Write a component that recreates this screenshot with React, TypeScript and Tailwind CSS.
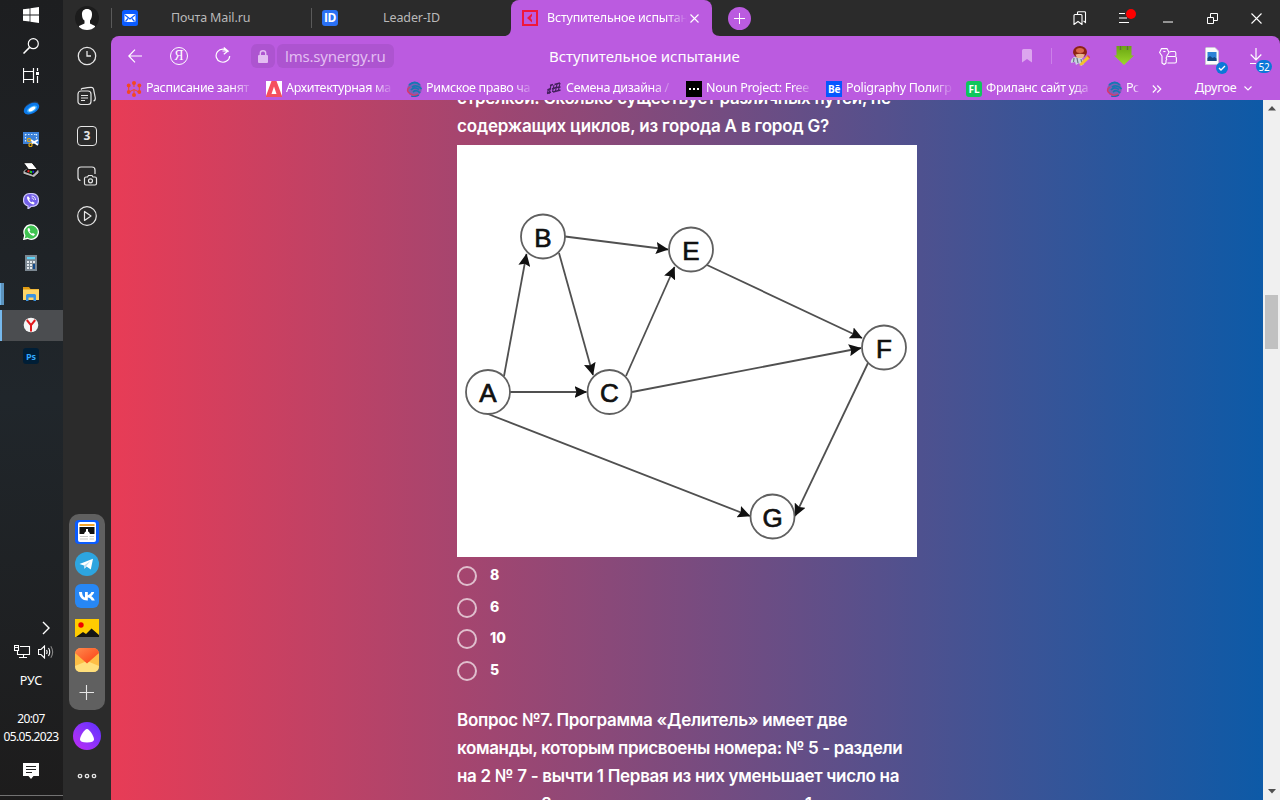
import React from "react";

type IconProps = { w?: number; h?: number; vb?: string; className?: string; sw?: number; children: React.ReactNode };

function Icon({ w = 24, h, vb, className = "", sw = 1.2, children }: IconProps) {
  const height = h ?? w;
  return (
    <svg
      width={w}
      height={height}
      viewBox={vb ?? `0 0 ${w} ${height}`}
      fill="none"
      stroke="currentColor"
      strokeWidth={sw}
      className={`block shrink-0 ${className}`}
    >
      {children}
    </svg>
  );
}

/* ---------- OS task bar ---------- */

const taskIcons: React.ReactNode[] = [
  <Icon w={16} key="win">
    <g fill="#fff" stroke="none">
      <path d="M0 2.3 6.6 1.4V7.5H0zM7.4 1.3 16 0V7.5H7.4zM0 8.4H6.6V14.6L0 13.7zM7.4 8.4H16V16L7.4 14.7z" />
    </g>
  </Icon>,
  <Icon w={16} key="search">
    <circle cx="10.3" cy="5.7" r="5" />
    <path d="M6.6 9.4 0.5 15.5" strokeWidth="1.5" />
  </Icon>,
  <Icon w={16} h={18} key="view">
    <path d="M.5 0V3.500H10.500V0M.5 15V11.500H10.500V15M.5 5.500V9.500M10.500 5.500V9.500M.5 3.500V11.500M10.500 3.500V11.500M14.500 0V3M14.500 8V15" />
    <rect x="13" y="4" width="3" height="3" fill="#fff" stroke="none" />
  </Icon>,
  <Icon w={18} h={16} key="disk">
    <g stroke="none">
      <ellipse cx="9" cy="6.500" rx="8" ry="3.800" transform="rotate(-28 9 6)" fill="#2a3a50" />
      <ellipse cx="9.500" cy="8.700" rx="8.300" ry="5" transform="rotate(-28 9.500 8.700)" fill="#0b78e8" />
      <ellipse cx="10" cy="9" rx="5.500" ry="2.700" transform="rotate(-30 10 9)" fill="#45b4ff" />
      <ellipse cx="10" cy="9" rx="3.800" ry="1.700" transform="rotate(-30 10 9)" fill="#fff" />
    </g>
  </Icon>,
  <Icon w={16} key="snip">
    <rect y="1" width="16" height="12" fill="#3b80d8" stroke="none" />
    <path d="M2 3.500H14M2.500 3V11M13.500 3V9" stroke="#d6ecff" strokeDasharray="1.500 1.500" />
    <path d="M8 9 15 14M8.500 12.500 15 9" stroke="#fff" strokeWidth="1.800" />
    <circle cx="6" cy="9" r="1.600" stroke="#e3a818" />
    <circle cx="7.500" cy="14" r="1.600" stroke="#e3a818" />
  </Icon>,
  <Icon w={16} key="scan">
    <g stroke="#000" strokeWidth=".8">
      <path d="M0 9 4 6 16 8V11L11 15.500 0 12z" fill="#b9b9b9" />
      <path d="M2 9.500 5 6.500 14 8.500 10 12.500z" fill="#111" />
      <path d="M.5 .7H9L14.500 7.500H5.500z" fill="#fff" />
    </g>
    <path d="M4.500 9 6.500 9.500" stroke="#e22" strokeWidth="2" />
    <path d="M7 9.500 9 10.500" stroke="#2c2" strokeWidth="2" />
    <path d="M9.500 9.500 11 10" stroke="#22e" strokeWidth="2" />
  </Icon>,
  <Icon w={16} key="viber">
    <path d="M8 .5C13 .5 15.500 2.500 15.500 7.300S13 13.500 8 13.500L5 16V13C2 12 .5 10.500 .5 7.300 .5 2.500 3 .5 8 .5z" fill="#7360e8" stroke="#cfc8fa" />
    <path d="M4.300 3.600C3 5.500 6.500 11 10.500 11.500L11.800 9.900 9.600 8.500 8.700 9.300C7.500 8.800 6.600 7.800 6.200 6.700L7 5.800 5.600 3.400z" fill="#fff" stroke="none" />
    <path d="M8.500 3C11 3 12.500 4.500 12.500 7M8.700 5C10 5 10.600 5.800 10.600 6.800" stroke="#fff" strokeWidth=".9" />
  </Icon>,
  <Icon w={16} key="wa">
    <path d="M.8 15.300 1.800 11.500A7.200 7.200 0 1 1 4.500 14.300z" fill="#3fc351" stroke="#fff" strokeWidth="1.300" />
    <path d="M5 4.200C3.500 6 7 11.500 10.800 11.800L12 10.200 9.900 8.900 9 9.800C7.800 9.300 7 8.500 6.500 7.300L7.300 6.400 6.300 4.100z" fill="#fff" stroke="none" />
  </Icon>,
  <Icon w={12} h={16} key="calc">
    <g stroke="none">
      <rect width="12" height="16" fill="#7b8791" />
      <rect x="2" y="2" width="8" height="2.200" fill="#5fd3f7" />
      <g fill="#e4e9ed">
        <path d="M2 6h2v2H2zM5 6h2v2H5zM8 6h2v2H8zM2 9h2v2H2zM5 9h2v2H5zM2 12h2v2H2zM5 12h2v2H5z" />
      </g>
      <rect x="8" y="9" width="2" height="5" fill="#124a8c" />
    </g>
  </Icon>,
  <Icon w={16} h={14} key="folder">
    <g stroke="none">
      <path d="M0 0H6L7.500 2H16V5H0z" fill="#e09a10" />
      <rect y="2.500" width="16" height="10.500" fill="#fdd568" />
      <path d="M3 14V8.500Q3 7 4.500 7H11.500Q13 7 13 8.500V14H10.500V10.500H5.500V14z" fill="#3b93e0" />
    </g>
  </Icon>,
  <Icon w={16} key="ya">
    <circle cx="8" cy="8" r="7.300" fill="#f5f5f5" stroke="none" />
    <path d="M3.800 3 8 8.200 12.200 3M8 8V14.500" stroke="#e2191d" strokeWidth="2" />
  </Icon>,
  <div key="ps" className="flex h-4 w-4 items-center justify-center rounded-[3px] bg-[#001e36] font-['Open_Sans',sans-serif] text-[9px] leading-none font-bold text-[#31a8ff]">
    Ps
  </div>,
];

function TaskBar() {
  return (
    <aside className="flex h-[800px] w-[63px] shrink-0 flex-col bg-gradient-to-b from-[#1d1e20] via-[#20262b] to-[#1d1c1c] text-white">
      {taskIcons.map((icon, i) => (
        <div
          key={i}
          className={
            i === 10
              ? "flex h-[31px] items-center justify-center border-l-2 border-[#76b9ed] bg-[#4b4d50] pr-1 pb-px"
              : "flex h-[31px] items-center pr-px pb-px"
          }
        >
          {i === 9 && <span className="flex h-[22px] w-1 border-l border-[#76b9ed] bg-[#5c93bd]" />}
          <span className={i === 9 ? "flex flex-1 justify-center pr-1" : "flex flex-1 justify-center"}>{icon}</span>
        </div>
      ))}
      <div className="mt-auto flex flex-col font-['Noto_Sans',sans-serif] text-[12px]">
        <div className="flex h-4 justify-end pt-px pr-[13px]">
          <Icon w={8} h={14} sw={1.400}>
            <path d="M1 1 7 7 1 13" />
          </Icon>
        </div>
        <div className="mt-[8px] flex h-4 items-center gap-[7px] pl-[14px]">
          <Icon w={17} h={14} sw={1.100}>
            <path d="M6 1.500H15.500V9.500H3.500V6M9.500 9.500V12.500M5 12.500H13" />
            <path d="M.5 .5H4.500V5.500H.5zM.5 2.500H4.500" />
          </Icon>
          <Icon w={17} h={14} sw={1.100}>
            <path d="M.5 4.500H3L6.500 1V13L3 9.500H.5zM8.500 5Q9.700 7 8.500 9M10.500 3Q13 7 10.500 11" />
            <path d="M12.800 1.200Q16.500 7 12.800 12.800" stroke="#888" />
          </Icon>
        </div>
        <div className="mt-[13px] pr-px text-center text-[12.5px] leading-4">РУС</div>
        <div className="mt-[21px] pr-px text-center leading-[18px] tracking-[-0.65px]">
          20:07
          <br />
          05.05.2023
        </div>
        <div className="mt-[17px] flex justify-center pr-px">
          <Icon w={16}>
            <path d="M0 0H16V13H10.500L8 16 5.500 13H0z" fill="#fff" stroke="none" />
            <path d="M3 3.500H13M3 6.500H13M3 9.500H9" stroke="#222" />
          </Icon>
        </div>
        <div className="mt-[16px] mb-[4px] h-px bg-[#727272]" />
      </div>
    </aside>
  );
}

/* ---------- Browser side panel ---------- */

function SidePanel() {
  return (
    <nav className="flex h-[800px] w-12 shrink-0 flex-col items-center bg-[#2b2b2b] text-[#e6e6e6]">
      <div className="mt-[6px] flex h-6 w-6 justify-center overflow-hidden rounded-full bg-[#1c1c1c]">
        <Icon w={24}>
          <path d="M12 3C15.500 3 17.300 5.300 17 9 16.800 12 15.800 13.500 15 14.500V17.500L20 20V24H4V20L9.500 17.500V14.500C8 13.500 7.200 12 7 9 6.700 5.300 8.500 3 12 3z" fill="#fff" stroke="none" />
        </Icon>
      </div>
      <div className="mt-[6px] flex flex-col items-center">
        <div className="flex h-10 items-center">
          <Icon w={20} sw={1.300}>
            <circle cx="10" cy="10" r="8.700" />
            <path d="M10 5V10H14" />
          </Icon>
        </div>
        <div className="flex h-10 items-center">
          <Icon w={20} sw={1.200}>
            <rect x="1" y="5" width="13" height="13.500" rx="3" />
            <path d="M4 9.500H11M4 12H11M4 14.500H8" />
            <path d="M4 3.500 5 2.500Q6 2 14 1.300 16 1.200 16.500 3L18.300 12Q18.500 14.500 16.500 15" />
          </Icon>
        </div>
        <div className="flex h-10 items-center">
          <div className="flex h-5 w-5 items-center justify-center rounded-[4px] border border-[#e6e6e6] font-['Open_Sans',sans-serif] text-[12px] leading-none font-bold">
            3
          </div>
        </div>
        <div className="flex h-10 items-center">
          <Icon w={22} h={20} sw={1.200}>
            <path d="M4.500 14.500Q2 14 2 11.500V4Q2 1 5 1H16Q19 1 19 4V8" />
            <path d="M8.500 12.500Q8.500 11 10 11H11.500L12.500 9.500H16L17 11H19Q20.500 11 20.500 12.500V17.500Q20.500 19 19 19H10Q8.500 19 8.500 17.500z" />
            <circle cx="14.500" cy="14.800" r="2" />
          </Icon>
        </div>
        <div className="flex h-10 items-center">
          <Icon w={20} sw={1.200}>
            <circle cx="10" cy="10" r="9.300" />
            <path d="M7.500 5.500V14.500L14 10z" strokeLinejoin="round" />
          </Icon>
        </div>
      </div>
      <div className="mt-auto flex h-[196px] w-9 flex-col items-center gap-2 rounded-[10px] bg-[#606060] pt-[6px]">
        <Icon w={24}>
          <g stroke="none">
            <rect width="24" height="24" rx="4" fill="#0b5cff" />
            <rect x="3" y="2" width="18" height="20" rx="2" fill="#fff" />
            <rect x="4.500" y="4" width="15" height="2" fill="#f3a32b" />
            <rect x="4.500" y="7" width="15" height="7" fill="#111" />
            <path d="M9 14 10 12 11 11.500V9H13V11.500L14 12 15 14z" fill="#fff" />
            <path d="M5 16H13V17H5zM5 18.500H13V19.500H5zM14.500 16H19V17H14.500zM14.500 18.500H19V19.500H14.500z" fill="#c8c8c8" />
          </g>
        </Icon>
        <Icon w={24}>
          <g stroke="none">
            <circle cx="12" cy="12" r="12" fill="#2da5e0" />
            <path d="M4.500 12 18 6.800 15.800 17.500 11.500 14.500 9.500 16.800 9 13.500z" fill="#fff" />
            <path d="M9 13.500 15.500 9 11 14.200 9.500 16.800z" fill="#b8dcf0" />
          </g>
        </Icon>
        <Icon w={24}>
          <rect width="24" height="24" rx="6" fill="#2787f5" stroke="none" />
          <path
            d="M4 8H7C7.200 11.500 8.500 13.200 10 13.600V8H12.800V11.200C14.300 11 15.800 9.600 16.400 8H19.200C18.700 10 17.300 11.500 16.200 12.200 17.400 12.800 19 14 19.800 16.500H16.700C16.100 14.900 14.700 13.700 12.800 13.500V16.500H12.400C7.500 16.500 4.200 13.500 4 8z"
            fill="#fff"
            stroke="none"
          />
        </Icon>
        <Icon w={24}>
          <g stroke="none">
            <rect y="3" width="24" height="18" fill="#ffcc00" />
            <circle cx="6" cy="9" r="2.700" fill="#f00000" />
            <path d="M1 21 8 16 11 18 16.500 12.500 24 19V21z" fill="#151515" />
          </g>
        </Icon>
        <Icon w={24}>
          <defs>
            <linearGradient id="mailTop" x1="0" y1="0" x2="1" y2="1">
              <stop offset="0" stopColor="#ff8a4d" />
              <stop offset="1" stopColor="#fb3d12" />
            </linearGradient>
          </defs>
          <g stroke="none">
            <rect width="24" height="24" rx="6" fill="#fdbe45" />
            <path d="M0 18 12 13 24 18Q24 24 18 24H6Q0 24 0 18z" fill="#ffdf7c" />
            <path d="M0 5Q1 0 6 0H18Q23 0 24 5L12 15.500z" fill="url(#mailTop)" />
          </g>
        </Icon>
        <Icon w={24} sw={1.100}>
          <path d="M4.500 12.500H19M11.500 5V20" />
        </Icon>
      </div>
      <div className="mt-3 flex h-7 w-7 items-center justify-center rounded-full bg-gradient-to-tr from-[#c026f5] to-[#5b2dff]">
        <Icon w={14}>
          <path d="M7 0C9.500 0 14 7 14 10.500Q14 13.500 7 13.500T0 10.500C0 7 4.500 0 7 0z" fill="#fff" stroke="none" />
        </Icon>
      </div>
      <div className="mt-[23px] mb-[21px]">
        <Icon w={20} h={6} sw={1.300}>
          <circle cx="3" cy="3" r="1.700" />
          <circle cx="10" cy="3" r="1.700" />
          <circle cx="17" cy="3" r="1.700" />
        </Icon>
      </div>
    </nav>
  );
}

/* ---------- Tabs ---------- */

function Cell({ children }: { children?: React.ReactNode }) {
  return <div className="relative flex h-9 w-11 shrink-0 items-center justify-center">{children}</div>;
}

function TabBar() {
  return (
    <div className="flex h-9 items-center bg-[#2b2b2b] font-['Noto_Sans',sans-serif] text-[12.5px] text-[#b9b9b9]">
      <div className="flex h-5 w-[200px] items-center border-l border-[#5a5a5a] pl-[10px]">
        <Icon w={16}>
          <rect width="16" height="16" rx="2.500" fill="#0b5cff" stroke="none" />
          <rect x="2.500" y="4" width="11" height="8" rx="1" fill="#fff" stroke="none" />
          <path d="M3 5 8 9 13 5M3.500 11.500 6 8.500M12.500 11.500 10 8.500" stroke="#0b5cff" strokeWidth="1.200" />
        </Icon>
        <span className="ml-[33px] whitespace-nowrap tracking-[-0.12px]">Почта Mail.ru</span>
      </div>
      <div className="flex h-5 w-[200px] items-center border-l border-[#5a5a5a] pl-[10px]">
        <div className="flex h-4 w-4 items-center justify-center rounded-[3px] bg-[#2a71f5] font-['Open_Sans',sans-serif] text-[12px] leading-none font-bold tracking-[-0.5px] text-white">
          ID
        </div>
        <span className="ml-[45px] whitespace-nowrap tracking-[-0.1px]">Leader-ID</span>
      </div>
      <div className="relative flex h-9 w-[201px] items-center rounded-t-lg bg-[#bb5be0] pl-[11px] text-white">
        <svg width="8" height="8" className="absolute bottom-0 -left-2 block">
          <path d="M8 0V8H0Q8 8 8 0z" fill="#bb5be0" />
        </svg>
        <svg width="8" height="8" className="absolute -right-2 bottom-0 block">
          <path d="M0 0V8H8Q0 8 0 0z" fill="#bb5be0" />
        </svg>
        <Icon w={16}>
          <rect x="1" y="1" width="14" height="14" stroke="#f0163a" strokeWidth="2" />
          <path d="M10 3.500 5 8 10 12.500V10L8.500 8 10 6z" fill="#f0163a" stroke="none" />
        </Icon>
        <span className="ml-[9px] w-[140px] overflow-hidden mask-r-from-85% mask-r-to-100% whitespace-nowrap tracking-[-0.2px]">
          Вступительное испытан
        </span>
        <Icon w={9} className="ml-[3px]" sw={1.100}>
          <path d="M.5 .5 8.500 8.500M8.500 .5 .5 8.500" />
        </Icon>
      </div>
      <div className="ml-4 flex h-[23px] w-[23px] items-center justify-center rounded-full bg-[#bb5be0] text-white">
        <Icon w={11} sw={1}>
          <path d="M0 5.500H11M5.500 0V11" />
        </Icon>
      </div>
      <div className="mr-0.5 ml-auto flex text-white">
        <Cell>
          <Icon w={14} sw={1.100}>
            <path d="M1 4.500Q1 3.500 2 3.500H8Q9 3.500 9 4.500V13.500L5 10.500 1 13.500z" />
            <path d="M4.500 3V1.500Q4.500 .8 5.500 .8H11.500Q12.500 .8 12.500 1.500V11.500L10.500 10" />
          </Icon>
        </Cell>
        <Cell>
          <Icon w={16} h={14} sw={1.100}>
            <path d="M3 2.500H9M3 7H11M3 11.500H13" />
          </Icon>
          <span className="absolute top-[9px] left-[24px] h-2.5 w-2.5 rounded-full bg-[#fe0000]" />
        </Cell>
        <Cell>
          <Icon w={10} h={10}>
            <path d="M0 9H10" strokeWidth="1" />
          </Icon>
        </Cell>
        <Cell>
          <Icon w={11} sw={1}>
            <path d="M.5 4.500H6.500V10.500H.5zM3.500 4V.5H10.500V7.500H7" />
          </Icon>
        </Cell>
        <Cell>
          <Icon w={11} sw={1.100}>
            <path d="M.5 .5 10.500 10.500M10.500 .5 .5 10.500" />
          </Icon>
        </Cell>
      </div>
    </div>
  );
}

/* ---------- Tool bar ---------- */

function ToolBar() {
  return (
    <div className="flex h-10 items-center font-['Noto_Sans',sans-serif] text-white">
      <Icon w={14} h={14} className="ml-[17px]">
        <path d="M14 7H1M7 .7.8 7 7 13.300" />
      </Icon>
      <div className="ml-[28px] flex h-[18px] w-[18px] items-center justify-center rounded-full border border-white font-['Liberation_Serif',serif] text-[14px] leading-none">
        Я
      </div>
      <Icon w={16} h={18} className="ml-[27px]">
        <path d="M13.500 5A6.800 6.500 0 1 0 14.700 9M7.500 4H13M8.800 .5 13 4 8.800 7.300" />
      </Icon>
      <div className="ml-[20px] flex h-6 w-6 items-center justify-center rounded-md bg-[#ad54d0]">
        <Icon w={10} h={13}>
          <rect y="5" width="10" height="8" rx="1" fill="#e3bdf2" stroke="none" />
          <path d="M2.300 5V3.300A2.700 2.500 0 0 1 7.700 3.300V5" stroke="#e3bdf2" strokeWidth="1.400" />
        </Icon>
      </div>
      <div className="ml-0.5 flex h-6 w-[117px] items-center rounded-md bg-[#ad54d0] pl-2 text-[15px] whitespace-nowrap tracking-[-0.2px] text-[#e3bdf2]">
        lms.synergy.ru
      </div>
      <div className="ml-[155px] text-[15px] whitespace-nowrap tracking-[-0.05px]">Вступительное испытание</div>
      <div className="mr-0.5 ml-auto flex items-center">
        <Icon w={10} h={14} className="mr-[19px]">
          <path d="M0 1.500Q0 0 1.500 0H8.500Q10 0 10 1.500V13.500L5 10 0 13.500z" fill="#dca6ee" stroke="none" />
        </Icon>
        <div className="mr-[6px] h-4 w-px bg-[#cb80e8]" />
        <Cell>
          <Icon w={20}>
            <g stroke="none">
              <path d="M4 11Q0 14 1 17L5 16 6 19 9 17 11 20 14 18 12 12z" fill="#c9d3e0" />
              <path d="M4 12 3.500 16M7 12 8 17M11 13 12 18" stroke="#6b7686" strokeWidth="1.200" />
              <ellipse cx="10" cy="6" rx="7" ry="6" fill="#8c2413" />
              <ellipse cx="10" cy="4.500" rx="4" ry="2.500" fill="#d9694c" />
              <path d="M5.500 8.500Q10 7 15 8.500L13 12H7z" fill="#e9b48c" />
              <path d="M10 17.500 17.500 9.500 20 12 12.500 19 9.500 19.500z" fill="#f2c12e" />
              <path d="M17.500 9.500 20 12" stroke="#e05050" strokeWidth="1.500" />
            </g>
          </Icon>
        </Cell>
        <Cell>
          <Icon w={20}>
            <defs>
              <linearGradient id="dl" x1="0" y1="0" x2="0" y2="1">
                <stop offset="0" stopColor="#6aa512" />
                <stop offset="1" stopColor="#9bd92b" />
              </linearGradient>
            </defs>
            <path d="M2.500 0H5.500V4H7.500V0H12.500V4H14.500V0H17.500V9.500H20L10 19 0 9.500H2.500z" fill="url(#dl)" stroke="none" />
            <path d="M5.500 0H7.500V4H5.500zM12.500 0H14.500V4H12.500z" fill="#588c10" stroke="none" />
          </Icon>
        </Cell>
        <Cell>
          <Icon w={18} h={17} sw={1.100}>
            <path
              d="M2.500 .6H8L10 4.500 7.800 8V9L7 10 7.800 11.200 7 12.500V15L5.200 16.500 3 15V8L.6 4.500z"
              strokeLinejoin="round"
            />
            <path d="M10.500 4Q11 3.500 12 3.500H15.500Q16.800 3.500 16.800 5V8M8.500 8.500H16Q17.400 8.500 17.400 10V13.500Q17.400 15 16 15H8.500" />
            <path d="M4.300 3.500H6.500" />
          </Icon>
        </Cell>
        <Cell>
          <Icon w={14} h={18}>
            <path d="M.5 1.500Q.5 .5 1.500 .5H10L13.500 4V17.500H.5z" fill="#fbfbfb" stroke="#c6c6d0" strokeWidth=".8" />
            <rect x="2.500" y="5" width="9" height="9" fill="#2c82d6" stroke="none" />
            <path d="M2.500 14V11L5 9 7.500 11 9.500 10 11.500 11.500V14z" fill="#124982" stroke="none" />
          </Icon>
          <span className="absolute top-6 left-[26px] flex h-3 w-3 items-center justify-center rounded-full bg-[#0b78d8]">
            <Icon w={8} h={6} sw={1.300}>
              <path d="M1 3 3 5 7 1" />
            </Icon>
          </span>
        </Cell>
        <Cell>
          <Icon w={12} h={16}>
            <path d="M6 0V12M.7 6.500 6 12 11.300 6.500M0 15.500H6" />
          </Icon>
          <span className="absolute top-[22px] left-[22px] flex h-[13px] w-4 items-center justify-center rounded-full bg-[#0b78d8] text-[10px] leading-none tracking-[-0.3px]">
            52
          </span>
        </Cell>
      </div>
    </div>
  );
}

/* ---------- Bookmarks ---------- */

const Swirl = () => (
  <Icon w={16}>
    <circle cx="8.500" cy="8" r="7.300" fill="#7c5fb8" stroke="none" />
    <path d="M3 4Q9-1 14 4M6 6Q11 3 15.500 8M5 9Q8 5 13 8.500M7 11Q11 8 14 12" stroke="#1678b4" strokeWidth="1.700" />
    <path d="M4 6Q-1 9 4 12.500T12 13" stroke="#e03563" strokeWidth="1.400" />
    <path d="M5 15Q9 16.500 13 14" stroke="#1d6fb0" strokeWidth="1.200" />
  </Icon>
);

const bookmarks: { label: string; icon: React.ReactNode }[] = [
  {
    label: "Расписание занят",
    icon: (
      <Icon w={16}>
        <g fill="#f4491f" stroke="none">
          <circle cx="8" cy="2" r="2" />
          <circle cx="2.700" cy="4.500" r="1.900" />
          <circle cx="13.300" cy="4.500" r="1.900" />
          <circle cx="2.700" cy="11" r="1.900" />
          <circle cx="13.300" cy="11" r="1.900" />
          <circle cx="8" cy="14" r="2" />
        </g>
        <path d="M8 2V6M2.700 5V11M13.300 5V11M3 11 8 8.500 13 11M8 9V14" stroke="#f4491f" strokeWidth="1" />
      </Icon>
    ),
  },
  {
    label: "Архитектурная ма",
    icon: (
      <Icon w={16}>
        <rect width="16" height="16" fill="#f5505f" stroke="none" />
        <path d="M0 0H5.500L0 15zM16 0H10.500L16 15zM8 5.500 10.500 13H5.500z" fill="#fff" stroke="none" />
      </Icon>
    ),
  },
  { label: "Римское право ча", icon: <Swirl /> },
  {
    label: "Семена дизайна /",
    icon: (
      <Icon w={16}>
        <path d="M4 4.500 7 3.500M8.500 3.500 14 2M1.500 9 5 7.500M6 8 10 6.500 14.500 6M1 12.500 5 11M7 11 14.500 9" stroke="#43205c" strokeWidth="1.400" />
        <path d="M5 4 3 13M8 4 6.500 11M11 3 9.500 10M14 2 12.500 9M2.500 8 1.500 12" stroke="#43205c" strokeWidth="1.100" />
      </Icon>
    ),
  },
  {
    label: "Noun Project: Free",
    icon: (
      <Icon w={16}>
        <rect width="16" height="16" fill="#000" stroke="none" />
        <path d="M3 7H5V9H3zM7 7H9V9H7zM11 7H13V9H11z" fill="#fff" stroke="none" />
      </Icon>
    ),
  },
  {
    label: "Poligraphy Полигр",
    icon: (
      <div className="flex h-4 w-4 shrink-0 items-center justify-center bg-[#0657ff] font-['Open_Sans',sans-serif] text-[10px] leading-none font-bold tracking-[-0.3px]">
        Bē
      </div>
    ),
  },
  {
    label: "Фриланс сайт уда",
    icon: (
      <div className="flex h-4 w-4 shrink-0 items-center justify-center rounded-[3px] bg-[#0fc65c] font-['Open_Sans',sans-serif] text-[10px] leading-none font-bold">
        FL
      </div>
    ),
  },
];

function Bookmarks() {
  return (
    <div className="flex h-6 items-center pt-px pl-[15px] font-['Noto_Sans',sans-serif] text-[12.5px] text-white">
      {bookmarks.map((b) => (
        <div key={b.label} className="flex w-[140px] shrink-0 items-center gap-1">
          {b.icon}
          <span className="w-[108px] overflow-hidden mask-r-from-80% mask-r-to-100% whitespace-nowrap tracking-[-0.32px]">
            {b.label}
          </span>
        </div>
      ))}
      <div className="flex w-[46px] shrink-0 items-center gap-1">
        <Swirl />
        <span className="w-[14px] overflow-hidden mask-r-from-50% mask-r-to-100% whitespace-nowrap tracking-[-0.5px]">Рс</span>
      </div>
      <Icon w={10} h={8} sw={1.100}>
        <path d="M.8 .5 4.300 4 .8 7.500M5.300 .5 8.800 4 5.300 7.500" />
      </Icon>
      <span className="ml-[33px] w-[49px] whitespace-nowrap tracking-[-0.15px]">Другое</span>
      <Icon w={8} h={5} sw={1.100}>
        <path d="M.5 .5 4 4 7.500 .5" />
      </Icon>
    </div>
  );
}

/* ---------- Graph ---------- */

const nodes = [
  { id: "A", x: 31, y: 247 },
  { id: "B", x: 86, y: 91.5 },
  { id: "C", x: 152.500, y: 247 },
  { id: "E", x: 234, y: 104.5 },
  { id: "F", x: 427, y: 202.500 },
  { id: "G", x: 315.500, y: 371.500 },
];

const edges: [number, number, number, number][] = [
  [47, 231, 69.5, 109],
  [53, 247, 129.5, 247],
  [31, 269, 293, 371],
  [108, 91.500, 211, 104.500],
  [102, 108, 136, 230],
  [169, 231, 217.5, 122],
  [175, 247, 404, 203],
  [250, 120, 405, 193],
  [411, 218, 338, 371],
];

function Graph() {
  return (
    <svg width="460" height="412" viewBox="0 0 460 412" className="block bg-white">
      <defs>
        <marker id="arrow" markerWidth="13" markerHeight="12" refX="12" refY="6" orient="auto" markerUnits="userSpaceOnUse">
          <path d="M0 0 12.500 6 0 12 2 6z" fill="#111" />
        </marker>
      </defs>
      {edges.map(([x1, y1, x2, y2], i) => (
        <line key={i} x1={x1} y1={y1} x2={x2} y2={y2} stroke="#505050" strokeWidth="1.8" markerEnd="url(#arrow)" />
      ))}
      {nodes.map((n) => (
        <g key={n.id}>
          <circle cx={n.x} cy={n.y} r="22" fill="#fff" stroke="#606060" strokeWidth="1.800" />
          <text
            x={n.x}
            y={n.y + 10}
            textAnchor="middle"
            fill="#111"
            stroke="#111"
            strokeWidth="0.7"
            className="font-['Liberation_Sans',sans-serif] text-[26px]"
          >
            {n.id}
          </text>
        </g>
      ))}
    </svg>
  );
}

/* ---------- Page ---------- */

function Page() {
  return (
    <main className="flex h-[700px] flex-1 justify-start overflow-hidden bg-linear-to-r/srgb from-[#e83c56] to-[#0d5aa7] pl-[346px] font-['Inter',sans-serif] text-white">
      <div className="-mt-4 w-[480px] shrink-0">
        <h2 className="text-[17px] leading-7 font-semibold whitespace-nowrap">
          <span className="block tracking-[-0.25px]">стрелкой. Сколько существует различных путей, не</span>
          <span className="block tracking-[-0.17px]">содержащих циклов, из города А в город G?</span>
        </h2>
        <div className="mt-[5px]">
          <Graph />
        </div>
        <ul className="mt-[3px] text-[14px] font-extrabold">
          {["8", "6", "10", "5"].map((v) => (
            <li key={v} className="flex h-[31.700px] items-center gap-[13px]">
              <span className="h-5 w-5 rounded-full border-2 border-white/65" />
              <span className="-mt-[3px]">{v}</span>
            </li>
          ))}
        </ul>
        <h2 className="mt-[19px] text-[17px] leading-7 font-semibold whitespace-nowrap">
          <span className="block tracking-[-0.3px]">Вопрос №7. Программа «Делитель» имеет две</span>
          <span className="block tracking-[-0.35px]">команды, которым присвоены номера: № 5 - раздели</span>
          <span className="block tracking-[-0.3px]">на 2 № 7 - вычти 1 Первая из них уменьшает число на</span>
          <span className="block tracking-[-0.2px] [word-spacing:3.6px]">экране в 2 раза, вторая уменьшает на 1</span>
        </h2>
      </div>
    </main>
  );
}

function ScrollBar() {
  return (
    <div className="flex h-[700px] w-[17px] shrink-0 flex-col items-center bg-[#f0f0f0] text-[#505050]">
      <Icon w={8} h={5} className="mt-[6px]">
        <path d="M4 0 8 4.500H0z" fill="currentColor" stroke="none" />
      </Icon>
      <div className="mt-[184px] h-[54px] w-[13px] bg-[#c1c1c1]" />
      <Icon w={8} h={5} className="mt-auto mb-[6px]">
        <path d="M4 4.500 8 0H0z" fill="currentColor" stroke="none" />
      </Icon>
    </div>
  );
}

export default function App() {
  return (
    <div className="flex h-[800px] w-[1280px] overflow-hidden bg-[#2b2b2b]">
      <TaskBar />
      <SidePanel />
      <div className="flex w-[1169px] shrink-0 flex-col">
        <TabBar />
        <header className="h-16 rounded-t-lg bg-[#bb5be0]">
          <ToolBar />
          <Bookmarks />
        </header>
        <div className="flex">
          <Page />
          <ScrollBar />
        </div>
      </div>
    </div>
  );
}
